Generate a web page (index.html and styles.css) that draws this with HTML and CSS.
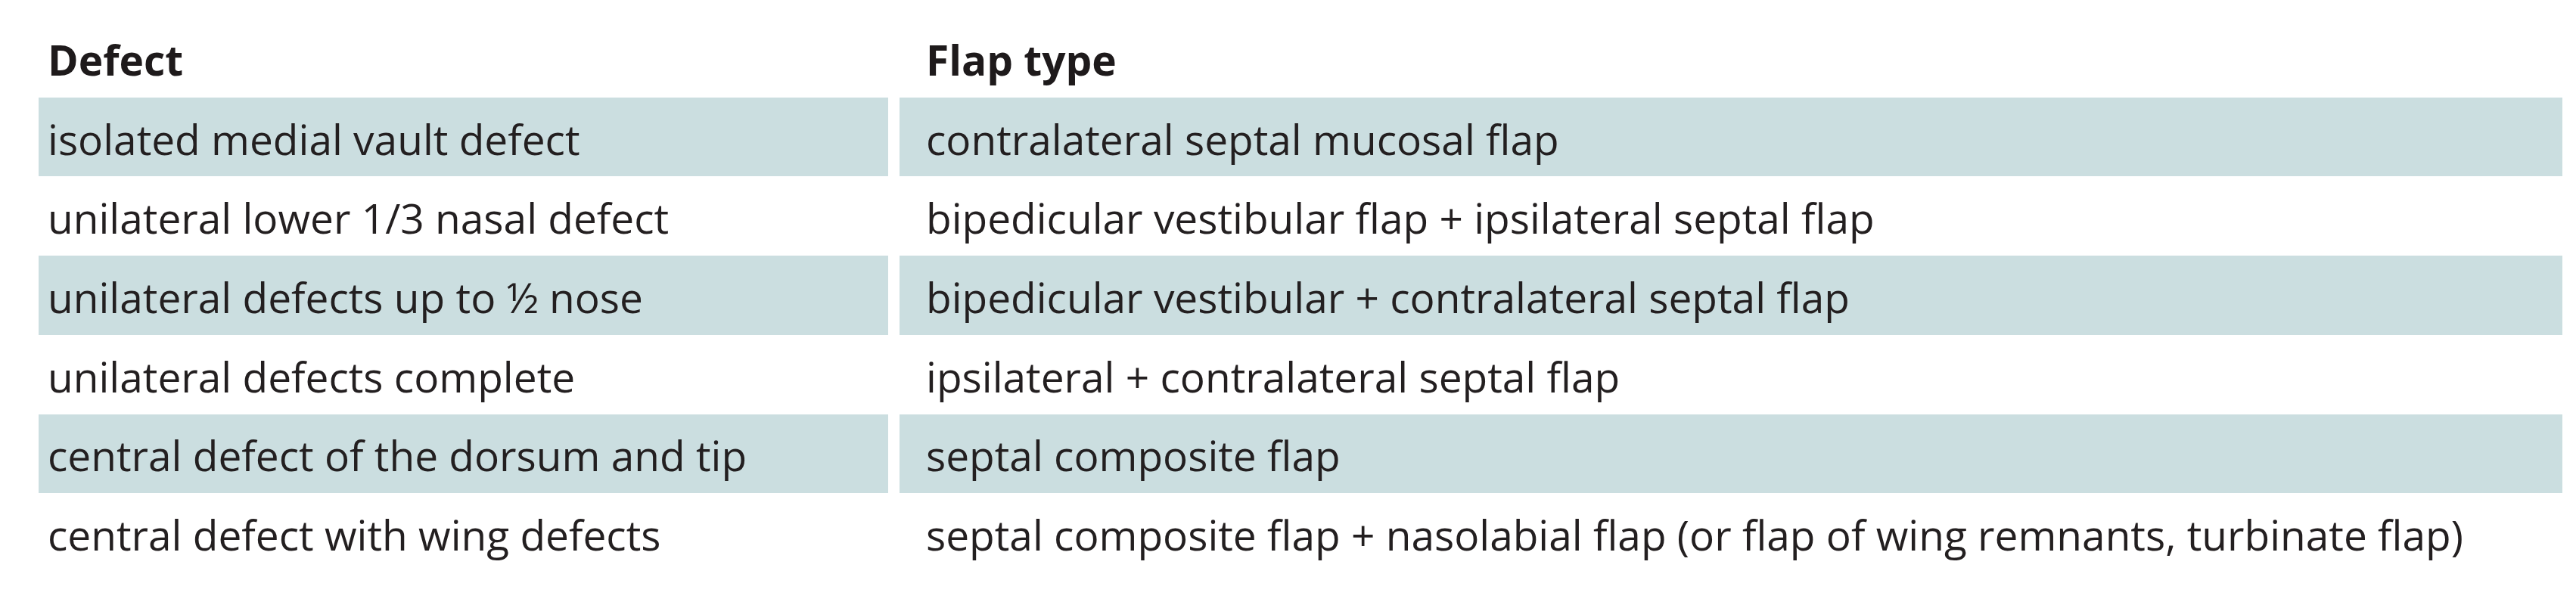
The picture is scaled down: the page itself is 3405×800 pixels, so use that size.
FILE: index.html
```html
<!DOCTYPE html>
<html lang="en">
<head>
<meta charset="utf-8">
<title>Defect / Flap type</title>
<link rel="stylesheet" href="styles.css">
</head>
<body>
<div class="table">
  <div class="cell head c1">Defect</div>
  <div class="cell head c2">Flap type</div>

  <div class="cell shade c1">isolated medial vault defect</div>
  <div class="cell shade c2">contralateral septal mucosal flap</div>

  <div class="cell c1">unilateral lower 1/3 nasal defect</div>
  <div class="cell c2">bipedicular vestibular flap + ipsilateral septal flap</div>

  <div class="cell shade c1">unilateral defects up to ½ nose</div>
  <div class="cell shade c2">bipedicular vestibular + contralateral septal flap</div>

  <div class="cell c1">unilateral defects complete</div>
  <div class="cell c2">ipsilateral + contralateral septal flap</div>

  <div class="cell shade c1">central defect of the dorsum and tip</div>
  <div class="cell shade c2">septal composite flap</div>

  <div class="cell c1">central defect with wing defects</div>
  <div class="cell c2">septal composite flap + nasolabial flap (or flap of wing remnants, turbinate flap)</div>
</div>
</body>
</html>
```

FILE: styles.css
```css
html, body {
  margin: 0;
  padding: 0;
  background: #ffffff;
}

body {
  font-family: "Open Sans", "Liberation Sans", Arial, sans-serif;
  color: #231f20;
  padding: 24px 0 0 51px;
}

.table {
  display: grid;
  grid-template-columns: 1123px 2198px;
  column-gap: 15px;
  grid-auto-rows: 104.71px;
}

.cell {
  display: flex;
  align-items: center;
  font-size: 55px;
  line-height: 55px;
  padding-top: 4px;
  box-sizing: border-box;
  white-space: nowrap;
}

.c1 {
  padding-left: 12px;
}

.c2 {
  padding-left: 35px;
}

.head {
  font-weight: bold;
  color: #1e1a1b;
}

.shade {
  background: #cbdee0;
}
```
